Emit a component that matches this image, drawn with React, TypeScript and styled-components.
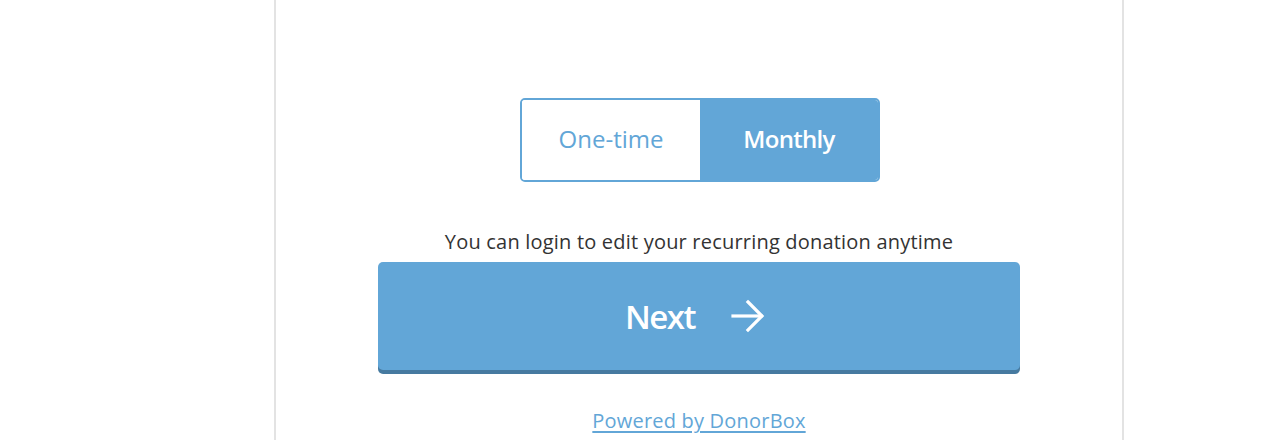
import React from "react";
import styled, { createGlobalStyle } from "styled-components";

const Global = createGlobalStyle`
  html, body { margin: 0; padding: 0; background: #fff; }
  body { font-family: "Open Sans", "Liberation Sans", sans-serif; }
`;

const Page = styled.div`
  height: 440px;
  overflow: hidden;
  padding-left: 274px;
`;

const Card = styled.div`
  width: 846px;
  min-height: 600px;
  border-left: 2px solid #e3e3e3;
  border-right: 2px solid #e3e3e3;
  display: flex;
  flex-direction: column;
  align-items: center;
  padding-top: 98px;
`;

const Toggle = styled.div`
  display: flex;
  width: 360px;
  height: 84px;
  margin-left: 2px;
  box-sizing: border-box;
  border: 2px solid #62a6d7;
  border-radius: 5px;
  overflow: hidden;
`;

const ToggleOption = styled.button<{ $active?: boolean }>`
  flex: 1;
  border: none;
  margin: 0;
  padding: 0 0 4px;
  font-family: "Open Sans", sans-serif;
  font-size: 24px;
  font-weight: ${(p) => (p.$active ? 600 : 400)};
  letter-spacing: ${(p) => (p.$active ? "-0.7px" : "0")};
  background: ${(p) => (p.$active ? "#62a6d7" : "#fff")};
  color: ${(p) => (p.$active ? "#fff" : "#62a6d7")};
  cursor: pointer;
`;

const Note = styled.p`
  margin: 48px 0 0;
  font-size: 20px;
  letter-spacing: 0.2px;
  line-height: 24px;
  color: #333;
`;

const NextButton = styled.button`
  margin-top: 8px;
  width: 642px;
  height: 108px;
  border: none;
  border-radius: 5px;
  background: #62a6d7;
  box-shadow: 0 4px 0 #467aa0;
  color: #fff;
  font-family: "Open Sans", sans-serif;
  font-size: 33px;
  font-weight: 600;
  letter-spacing: -1.5px;
  display: flex;
  align-items: center;
  justify-content: center;
  gap: 36px;
  padding: 0 8px 0 0;
  cursor: pointer;
`;

const Powered = styled.a`
  margin-top: 37px;
  font-size: 20px;
  letter-spacing: 0.2px;
  color: #62a6d7;
  text-decoration: underline;
  text-decoration-thickness: 1.5px;
  text-underline-offset: 3px;
`;

export default function App() {
  return (
    <>
      <Global />
      <Page>
        <Card>
          <Toggle>
            <ToggleOption>One-time</ToggleOption>
            <ToggleOption $active>Monthly</ToggleOption>
          </Toggle>
          <Note>You can login to edit your recurring donation anytime</Note>
          <NextButton>
            <span>Next</span>
            <svg width="34" height="34" viewBox="0 0 34 34" fill="none" stroke="#fff" strokeWidth="3.2" strokeLinecap="square">
              <path d="M2 17 H30" />
              <path d="M17 3 L31 17 L17 31" strokeLinejoin="miter" />
            </svg>
          </NextButton>
          <Powered href="#">Powered by DonorBox</Powered>
        </Card>
      </Page>
    </>
  );
}
